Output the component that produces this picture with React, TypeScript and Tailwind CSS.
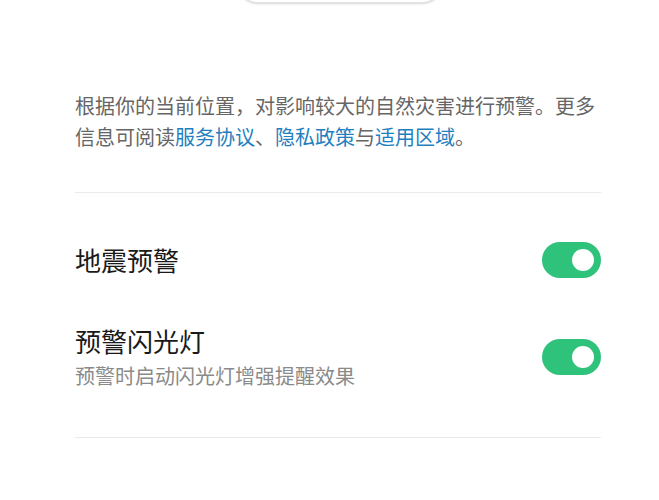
import React from "react"

function Toggle() {
  return (
    <div className="flex h-[36px] w-[59px] shrink-0 items-center justify-end rounded-full bg-[#2fc27b] pr-[7px]">
      <div className="h-[22px] w-[22px] rounded-full bg-white" />
    </div>
  )
}

export default function App() {
  return (
    <div
      className="flex h-[500px] w-full flex-col overflow-hidden bg-white"
      style={{ fontFamily: '"Noto Sans CJK SC", "Noto Sans", sans-serif' }}
    >
      {/* 顶部按钮（只露出底边） */}
      <div className="ml-[236px] mt-[-40px] h-[44px] w-[208px] rounded-full border-2 border-[#e2e2e2] bg-white shadow-[0_1px_2px_rgba(0,0,0,0.06)]" />

      <div className="ml-[75px] mr-[58px] flex flex-col">
        <p className="mt-[86px] whitespace-nowrap text-[20px] leading-[31px] text-[#666666]">
          根据你的当前位置，对影响较大的自然灾害进行预警。更多
          <br />
          信息可阅读<span className="text-[#1f7fc0]">服务协议</span>、<span className="text-[#1f7fc0]">隐私政策</span>与<span className="text-[#1f7fc0]">适用区域</span>。
        </p>

        <div className="mt-[40px] h-px bg-[#ebebeb]" />

        <div className="mt-[49px] flex items-center justify-between">
          <span className="text-[26px] leading-[36px] text-[#1a1a1a]">地震预警</span>
          <Toggle />
        </div>

        <div className="mt-[47px] flex items-center justify-between">
          <div className="flex flex-col">
            <span className="text-[26px] leading-[32px] text-[#1a1a1a]">预警闪光灯</span>
            <span className="mt-[6px] text-[20px] leading-[26px] text-[#8a8a8a]">预警时启动闪光灯增强提醒效果</span>
          </div>
          <Toggle />
        </div>

        <div className="mt-[48px] h-px bg-[#ebebeb]" />
      </div>
    </div>
  )
}
